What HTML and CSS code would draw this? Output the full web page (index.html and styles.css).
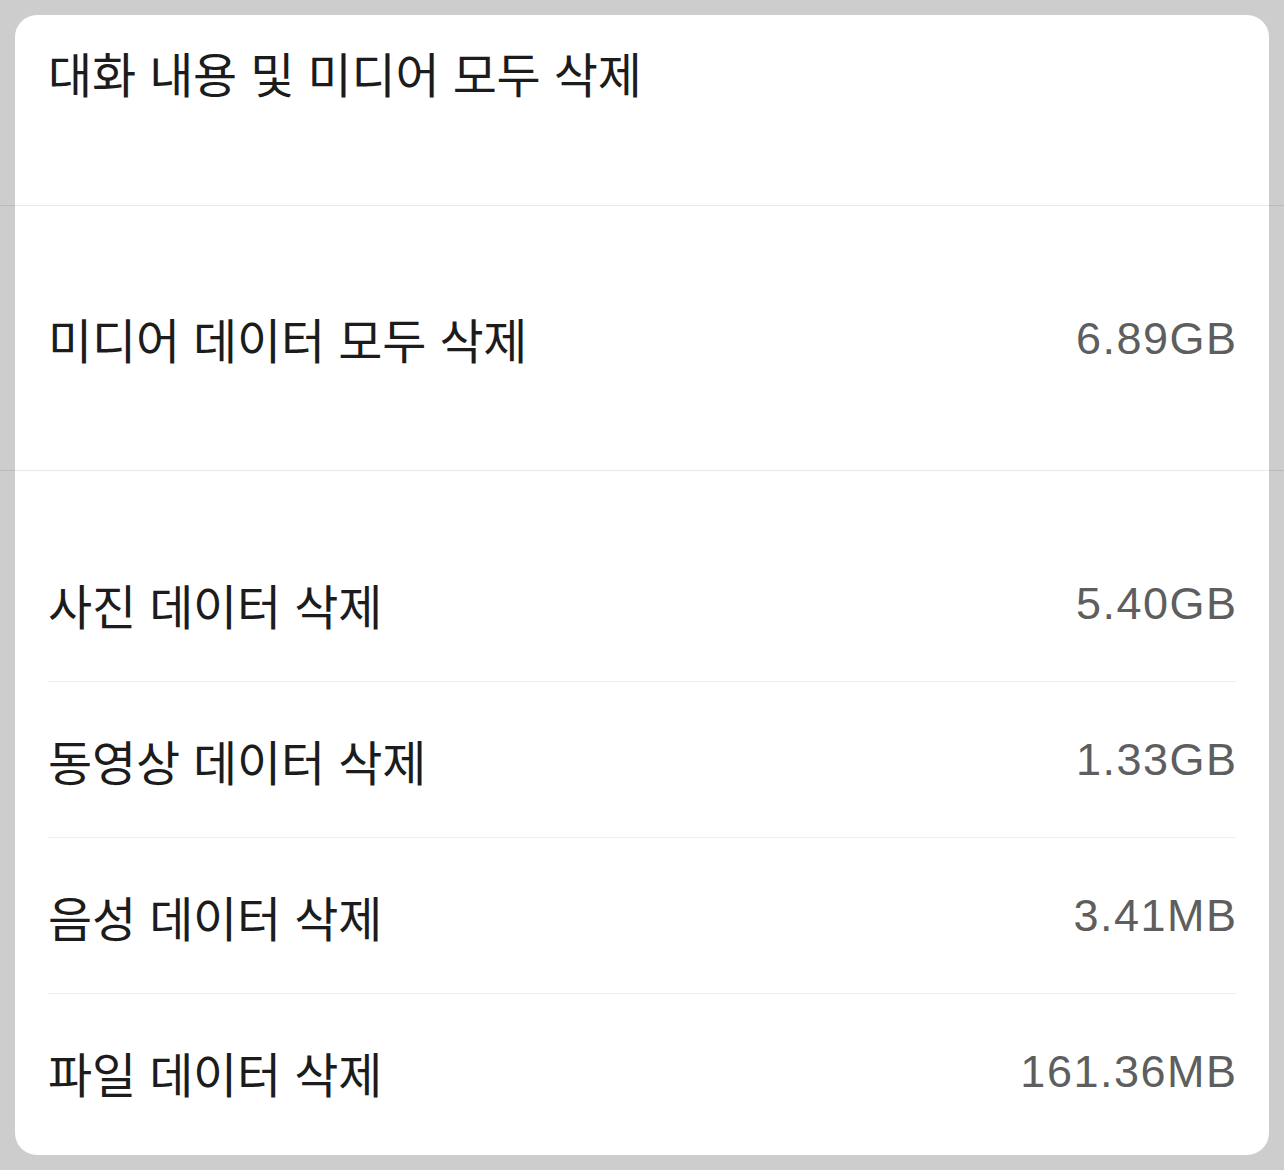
FILE: index.html
```html
<!DOCTYPE html>
<html lang="ko">
<head>
<meta charset="utf-8">
<link rel="stylesheet" href="styles.css">
</head>
<body>
<div class="page">
  <div class="card">
    <div class="section section-title">
      <div class="label">대화 내용 및 미디어 모두 삭제</div>
    </div>
    <div class="divider-full"></div>
    <div class="section section-media">
      <div class="row">
        <div class="label">미디어 데이터 모두 삭제</div>
        <div class="value">6.89GB</div>
      </div>
    </div>
    <div class="divider-full"></div>
    <div class="section section-list">
      <div class="row item">
        <div class="label">사진 데이터 삭제</div>
        <div class="value">5.40GB</div>
      </div>
      <div class="row item">
        <div class="label">동영상 데이터 삭제</div>
        <div class="value">1.33GB</div>
      </div>
      <div class="row item">
        <div class="label">음성 데이터 삭제</div>
        <div class="value">3.41MB</div>
      </div>
      <div class="row item">
        <div class="label">파일 데이터 삭제</div>
        <div class="value">161.36MB</div>
      </div>
    </div>
  </div>
</div>
</body>
</html>
```

FILE: styles.css
```css
html, body {
  margin: 0;
  padding: 0;
  background: #cdcdcd;
}
.page {
  width: 1284px;
  height: 1170px;
  box-sizing: border-box;
  padding: 15px 15px 15px 15px;
  overflow: hidden;
}
.card {
  background: #ffffff;
  border-radius: 22px;
  height: 1140px;
  display: flex;
  flex-direction: column;
}
.label {
  font-family: "Noto Sans CJK KR", "Noto Sans", sans-serif;
  font-size: 48px;
  color: #1c1c1c;
  line-height: 1;
  letter-spacing: -0.2px;
}
.value {
  font-family: "Liberation Sans", Arial, sans-serif;
  font-size: 45px;
  color: #5e5e5e;
  line-height: 1;
  letter-spacing: 1.5px;
  margin-right: -1.5px;
}
.divider-full {
  height: 1px;
  background: rgba(0, 0, 0, 0.09);
  margin: 0 -15px;
}
.section {
  padding: 0 33px;
}
.section-title {
  height: 190px;
  box-sizing: border-box;
  padding-top: 33px;
}
.section-media {
  height: 264px;
  display: flex;
  align-items: center;
}
.section-media .row {
  flex: 1;
}
.row {
  display: flex;
  align-items: center;
  justify-content: space-between;
}
.section-list {
  padding-top: 55px;
}
.item {
  height: 155px;
  border-bottom: 1px solid #efefef;
}
.item:last-child {
  border-bottom: none;
}
```
